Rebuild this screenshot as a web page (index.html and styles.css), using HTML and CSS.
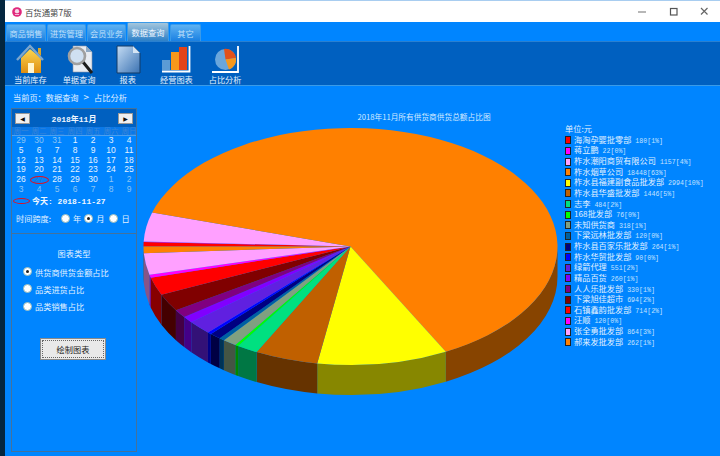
FILE: index.html
```html
<!DOCTYPE html>
<html>
<head>
  <meta charset="utf-8">
  <title>百货通第7版</title>
  <link rel="stylesheet" href="styles.css">
</head>
<body>
  <div class="edge"></div>
  <div class="window">
    <div class="titlebar">
      <svg class="logo" width="10" height="10" viewBox="0 0 12 12"><circle cx="6" cy="6" r="5.8" fill="#e0287c"/><circle cx="6" cy="5" r="2.6" fill="#f6d8e6"/><path d="M3.5 9h5" stroke="#f6d8e6"/></svg>
      <span class="app-name">百货通第7版</span>
      <div class="win-btns">
        <svg width="12" height="12" viewBox="0 0 12 12"><path d="M0 6h8" stroke="#888" stroke-width="1.2"/></svg>
        <svg width="12" height="12" viewBox="0 0 12 12"><rect x="1.5" y="2.5" width="6.5" height="6.5" fill="none" stroke="#555" stroke-width="1.2"/></svg>
        <svg width="12" height="12" viewBox="0 0 12 12"><path d="M1 2l6.5 6.5M7.5 2L1 8.5" stroke="#666" stroke-width="1.2"/></svg>
      </div>
    </div>

    <div class="tabs">
      <span class="tab">商品销售</span>
      <span class="tab">进货管理</span>
      <span class="tab">会员业务</span>
      <span class="tab active">数据查询</span>
      <span class="tab last">其它</span>
    </div>

    <div class="toolbar">
      <div class="tool">
        <svg width="32" height="30" viewBox="0 0 32 30">
          <defs>
            <linearGradient id="gold" x1="0" y1="0" x2="0" y2="1"><stop offset="0" stop-color="#fbd650"/><stop offset="1" stop-color="#df8e12"/></linearGradient>
            <linearGradient id="paper" x1="0" y1="0" x2="1" y2="1"><stop offset="0" stop-color="#c4dcf4"/><stop offset="1" stop-color="#3b72b2"/></linearGradient>
          </defs>
          <path d="M7 14L16 5l11 9v15H7z" fill="url(#gold)"/>
          <path d="M3 16L16 2l13 14" fill="none" stroke="#7ca6cc" stroke-width="2.4"/>
          <path d="M24 4h3v8l-3-3z" fill="#d9a428"/>
          <path d="M14 19h6v10h-6z" fill="#fff6d0"/>
        </svg>
        <span>当前库存</span>
      </div>
      <div class="tool">
        <svg width="32" height="30" viewBox="0 0 32 30">
          <path d="M10 2h13l6 6v20H10z" fill="#e8ecf2" stroke="#8a96a4" stroke-width=".6"/>
          <path d="M23 2l6 6h-6z" fill="#8fa9c4"/>
          <path d="M20 18l9 11" stroke="#1c1c1c" stroke-width="3"/>
          <circle cx="14" cy="12" r="8" fill="#cfe0f2" stroke="#a0a0a0" stroke-width="2.6"/>
        </svg>
        <span>单据查询</span>
      </div>
      <div class="tool">
        <svg width="32" height="30" viewBox="0 0 32 30">
          <path d="M5 2h16l7 7v20H5z" fill="url(#paper)" stroke="#123a66"/>
          <path d="M21 2l7 7h-7z" fill="#d4e4f4"/>
        </svg>
        <span>报表</span>
      </div>
      <div class="tool">
        <svg width="32" height="30" viewBox="0 0 32 30">
          <path d="M2 16h8v10H2z" fill="#5b9bd5"/>
          <path d="M11 8h8v18h-8z" fill="#f7981c"/>
          <path d="M19 3h8v23h-8z" fill="#e2431a"/>
          <path d="M2 27.500h27.500V2" fill="none" stroke="#fff" stroke-width="1.800"/>
        </svg>
        <span>经营图表</span>
      </div>
      <div class="tool">
        <svg width="32" height="30" viewBox="0 0 32 30">
          <circle cx="16.500" cy="15.500" r="10.500" fill="#6aa6dc"/>
          <path d="M16.500 15.500L15 5a10.500 10.500 0 0 1 12 9z" fill="#e2511a"/>
          <path d="M16.500 15.500L27 14a10.500 10.500 0 0 1-7 11.500z" fill="#f7981c"/>
          <path d="M3 28h26V2" fill="none" stroke="#fff" stroke-width="1.800"/>
        </svg>
        <span>占比分析</span>
      </div>
    </div>

    <div class="crumb">当前页：数据查询<span class="crumb-sep">&gt;</span>占比分析</div>

    <div class="content">
      <div class="side">
        <div class="panel cal-panel">
          <div class="cal-head">
            <span class="cal-btn">◀</span>
            <span class="cal-month">2018年11月</span>
            <span class="cal-btn">▶</span>
          </div>
          <div class="cal-week">
            <span>周一</span><span>周二</span><span>周三</span><span>周四</span><span>周五</span><span>周六</span><span>周日</span>
          </div>
          <div class="cal-days">
            <span class="off">29</span><span class="off">30</span><span class="off">31</span><span>1</span><span>2</span><span>3</span><span>4</span>
            <span>5</span><span>6</span><span>7</span><span>8</span><span>9</span><span>10</span><span>11</span>
            <span>12</span><span>13</span><span>14</span><span>15</span><span>16</span><span>17</span><span>18</span>
            <span>19</span><span>20</span><span>21</span><span>22</span><span>23</span><span>24</span><span>25</span>
            <span>26</span><span class="today">27</span><span>28</span><span>29</span><span>30</span><span class="off">1</span><span class="off">2</span>
            <span class="off">3</span><span class="off">4</span><span class="off">5</span><span class="off">6</span><span class="off">7</span><span class="off">8</span><span class="off">9</span>
          </div>
          <div class="cal-today"><span class="ring"></span>今天: 2018-11-27</div>
          <div class="span-row">
            <span class="span-label">时间跨度:</span>
            <span class="radio first"></span><span>年</span>
            <span class="radio on"></span><span>月</span>
            <span class="radio wide"></span><span>日</span>
          </div>
        </div>

        <div class="panel type-panel">
          <div class="type-title">图表类型</div>
          <div class="type-row"><span class="radio on"></span>供货商供货金额占比</div>
          <div class="type-row"><span class="radio"></span>品类进货占比</div>
          <div class="type-row"><span class="radio"></span>品类销售占比</div>
          <div class="draw-btn">绘制图表</div>
        </div>
      </div>

      <div class="chart-area">
        <div class="chart-title">2018年11月所有供货商供货总额占比图</div>
        <div class="chart-body">
          <svg id="pie" class="pie" width="416" height="275" viewBox="143 124 416 275"></svg>
          <div id="legend" class="legend">
            <div class="unit">单位:元</div>
          </div>
        </div>
      </div>
    </div>
  </div>

  <script src="chart.js"></script>
</body>
</html>
```

FILE: styles.css
```css
html, body {
  margin: 0;
  padding: 0;
  height: 456px;
  overflow: hidden;
}

body {
  display: flex;
  font-family: "Noto Sans CJK SC", "Liberation Sans", sans-serif;
  font-size: 8.2px;
  color: #e2f1ff;
  background-color: #0085ff;
}

.edge {
  width: 5px;
  background-color: #04263f;
}

.window {
  flex: 1;
  display: flex;
  flex-direction: column;
  min-width: 0;
}

.titlebar {
  height: 22px;
  box-sizing: border-box;
  border-top: 1px solid #a8cdf0;
  background-color: #fff;
  display: flex;
  align-items: center;
  padding-left: 7px;
  color: #444;
}

.app-name {
  margin-left: 3px;
  font-size: 8.4px;
}

.win-btns {
  margin-left: auto;
  display: flex;
  gap: 19px;
  padding-right: 8px;
}

.tabs {
  height: 19px;
  display: flex;
  align-items: flex-end;
  gap: 1px;
  padding-left: 1px;
  box-sizing: border-box;
}

.tab {
  height: 17px;
  box-sizing: border-box;
  width: 39px;
  text-align: center;
  line-height: 16px;
  color: #c0e0fa;
  background: linear-gradient(#5eb2f2, #1a80e2);
  border: 1px solid #3a9ae8;
  border-bottom: none;
  border-radius: 2px 2px 0 0;
}

.tab:first-child {
  width: 40px;
}

.tab.active {
  background: linear-gradient(#a4c6dc, #2c80c8);
  color: #eef7ff;
  height: 19px;
  width: 42px;
  line-height: 18px;
}

.tab.last {
  width: 31px;
}

.toolbar {
  height: 45px;
  box-sizing: border-box;
  background-color: #0060c0;
  border-top: 1px solid #2a80d0;
  border-bottom: 1px solid #3a9be8;
  padding: 2px 0 0 1px;
  display: flex;
}

.tool {
  width: 48.7px;
  display: flex;
  flex-direction: column;
  align-items: center;
  line-height: 11px;
}

.tool svg {
  display: block;
}

.crumb {
  height: 22px;
  line-height: 22px;
  padding-left: 8px;
}

.crumb-sep {
  margin: 0 5px;
  font-size: 10px;
}

.content {
  flex: 1;
  display: flex;
  min-height: 0;
}

.side {
  width: 126px;
  margin-left: 6px;
  flex-shrink: 0;
}

.panel {
  border: 1px solid #44729c;
  box-sizing: border-box;
}

.cal-panel {
  height: 126px;
}

.type-panel {
  height: 218px;
  border-top: none;
  padding-top: 12px;
}

.cal-head {
  height: 18px;
  background-color: #0060c0;
  display: flex;
  align-items: center;
  justify-content: space-between;
  padding: 0 3px;
}

.cal-btn {
  width: 15px;
  height: 11px;
  background-color: #f0f0f0;
  border: 1px solid #999;
  box-sizing: border-box;
  color: #111;
  font-size: 6px;
  line-height: 9px;
  text-align: center;
  font-family: "DejaVu Sans", sans-serif;
}

.cal-month {
  font-family: "Liberation Mono", "Noto Sans CJK SC", monospace;
  font-weight: bold;
  font-size: 8px;
  color: #eef6ff;
}

.cal-week {
  display: grid;
  grid-template-columns: repeat(7, 18px);
  height: 8px;
  line-height: 8px;
  font-size: 7.5px;
  text-align: center;
  color: #3c86d6;
  background-color: #0a78e8;
  border-bottom: 1px solid #4aa0f0;
}

.cal-days {
  display: grid;
  grid-template-columns: repeat(7, 18px);
  grid-auto-rows: 9.8px;
  line-height: 9.8px;
  text-align: center;
  font-size: 8.5px;
  font-family: "Liberation Sans", sans-serif;
  color: #e4f2ff;
}

.cal-days .off {
  color: #8cc4f4;
}

.today {
  position: relative;
  color: #2a78d0;
}

.today::after {
  content: "";
  position: absolute;
  left: 0;
  top: 1px;
  width: 17px;
  height: 6px;
  border: 1px solid #e01020;
  border-radius: 50%;
}

.cal-today {
  display: flex;
  align-items: center;
  height: 12px;
  padding-left: 1px;
  font-family: "Liberation Mono", "Noto Sans CJK SC", monospace;
  font-weight: bold;
  font-size: 8px;
  color: #eef6ff;
  white-space: pre;
}

.ring {
  width: 17px;
  height: 6px;
  margin-right: 2px;
  border: 1px solid #e01020;
  border-radius: 50%;
  box-sizing: border-box;
}

.span-row {
  display: flex;
  align-items: center;
  height: 13px;
  gap: 3px;
  margin-top: 5px;
  padding-left: 4px;
  white-space: nowrap;
}

.span-label {
  width: 37px;
}

.radio {
  display: inline-block;
  width: 7px;
  height: 7px;
  border-radius: 50%;
  background-color: #fff;
  border: 1px solid #9bb;
  flex-shrink: 0;
  position: relative;
}

.radio.first {
  margin-left: 5px;
}

.radio.wide {
  margin-left: 2px;
}

.radio.on::after {
  content: "";
  position: absolute;
  left: 2px;
  top: 2px;
  width: 3px;
  height: 3px;
  border-radius: 50%;
  background-color: #222;
}

.type-title {
  text-align: center;
  height: 14px;
  line-height: 14px;
}

.type-title + .type-row {
  margin-top: 3px;
}

.type-row {
  display: flex;
  align-items: center;
  gap: 3px;
  height: 17.3px;
  padding-left: 11px;
}

.draw-btn {
  width: 66px;
  height: 22px;
  box-sizing: border-box;
  margin: 23px 0 0 28px;
  background-color: #e9e9e9;
  border: 1px solid #8a8a8a;
  outline: 1px dotted #666;
  outline-offset: -3px;
  color: #222;
  text-align: center;
  line-height: 20px;
}

.chart-area {
  flex: 1;
  min-width: 0;
}

.chart-title {
  width: 574px;
  text-align: center;
  height: 12px;
  line-height: 12px;
  margin-top: 3px;
  font-size: 7.7px;
  color: #d4e9ff;
  white-space: nowrap;
}

.chart-body {
  display: flex;
  margin-left: 6px;
  margin-top: 1px;
}

.pie {
  display: block;
  flex-shrink: 0;
}

.legend {
  margin-left: 6px;
  white-space: nowrap;
  line-height: 10px;
}

.unit {
  height: 12px;
  margin-top: -1px;
  line-height: 10px;
}

.legend-row {
  display: flex;
  align-items: center;
  height: 10.63px;
}

.swatch {
  width: 4px;
  height: 6px;
  border: 1px solid #222;
  margin-right: 3px;
  flex-shrink: 0;
}

.val {
  margin-left: 4px;
  font-family: "Liberation Mono", monospace;
  font-size: 6.6px;
  color: #c4e2ff;
}
```

FILE: chart.js
```js
// supplier totals, clockwise from the left edge of the pie
const suppliers = [
  ['海淘孕婴批零部', 180, '1', '#ff0000'],
  ['蒋立鹏', 22, '0', '#ff00ff'],
  ['柞水潮阳商贸有限公司', 1157, '4', '#ffa0ff'],
  ['柞水烟草公司', 18448, '63', '#ff8000'],
  ['柞水县福建副食品批发部', 2994, '10', '#ffff00'],
  ['柞水县华盛批发部', 1446, '5', '#c06000'],
  ['志李', 484, '2', '#00e080'],
  ['168批发部', 76, '0', '#00ff00'],
  ['未知供货商', 318, '1', '#80a080'],
  ['下梁远林批发部', 120, '0', '#0060a0'],
  ['柞水县百家乐批发部', 264, '1', '#000080'],
  ['柞水华贸批发部', 90, '0', '#0000ff'],
  ['绿箭代理', 551, '2', '#6020e0'],
  ['精品百货', 260, '1', '#8000ff'],
  ['人人乐批发部', 330, '1', '#800080'],
  ['下梁旭佳超市', 694, '2', '#800000'],
  ['石镇鑫韵批发部', 714, '2', '#ff0000'],
  ['汪顺', 120, '0', '#ff00ff'],
  ['张全勇批发部', 864, '3', '#ffa0ff'],
  ['郝来发批发部', 262, '1', '#ff8000']
];

const cx = 350.5, cy = 246.5, rx = 207, ry = 118.5, depth = 30;
const total = suppliers.reduce((sum, s) => sum + s[1], 0);
const pie = document.getElementById('pie');
const legend = document.getElementById('legend');

function pt(deg) {
  const a = deg * Math.PI / 180;
  return [(cx + rx * Math.cos(a)).toFixed(2), (cy + ry * Math.sin(a)).toFixed(2)];
}

function darken(hex) {
  const n = parseInt(hex.slice(1), 16);
  const part = s => Math.round(((n >> s) & 255) * 0.53);
  return 'rgb(' + part(16) + ',' + part(8) + ',' + part(0) + ')';
}

function addPath(d, fill) {
  const p = document.createElementNS('http://www.w3.org/2000/svg', 'path');
  p.setAttribute('d', d);
  p.setAttribute('fill', fill);
  pie.appendChild(p);
}

let angle = 180;
const wedges = suppliers.map(s => {
  const start = angle;
  angle += s[1] / total * 360;
  return [start, angle, s[3]];
});

// rim first, only the front half of the pie shows it
wedges.forEach(w => {
  [[w[0], w[1]], [w[0] - 360, w[1] - 360]].forEach(r => {
    const a = Math.max(r[0], 0), b = Math.min(r[1], 180);
    if (a >= b) return;
    const p1 = pt(a), p2 = pt(b);
    addPath('M' + p1[0] + ' ' + p1[1] +
      'A' + rx + ' ' + ry + ' 0 0 1 ' + p2[0] + ' ' + p2[1] +
      'v' + depth +
      'A' + rx + ' ' + ry + ' 0 0 0 ' + p1[0] + ' ' + (+p1[1] + depth) + 'z', darken(w[2]));
  });
});

wedges.forEach(w => {
  const p1 = pt(w[0]), p2 = pt(w[1]);
  const large = w[1] - w[0] > 180 ? 1 : 0;
  addPath('M' + cx + ' ' + cy + 'L' + p1[0] + ' ' + p1[1] +
    'A' + rx + ' ' + ry + ' 0 ' + large + ' 1 ' + p2[0] + ' ' + p2[1] + 'z', w[2]);
});

suppliers.forEach(s => {
  const row = document.createElement('div');
  row.className = 'legend-row';
  const swatch = document.createElement('span');
  swatch.className = 'swatch';
  swatch.style.backgroundColor = s[3];
  // value sits inside the name span so both share a baseline
  const name = document.createElement('span');
  name.textContent = s[0];
  const val = document.createElement('span');
  val.className = 'val';
  val.textContent = s[1] + '[' + s[2] + '%]';
  name.appendChild(val);
  row.append(swatch, name);
  legend.appendChild(row);
});
```
